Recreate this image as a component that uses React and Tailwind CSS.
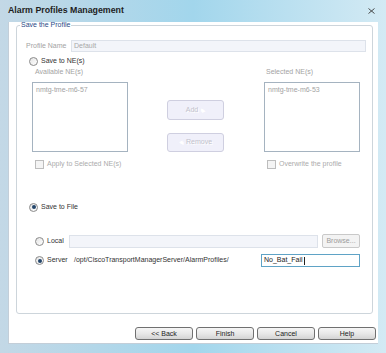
function Radio({ checked }) {
  return (
    <span className="w-[9px] h-[9px] shrink-0 rounded-full border border-[#8a8a8a] bg-linear-to-br from-[#e4e4e4] to-white flex items-center justify-center">
      {checked && <span className="w-[4px] h-[4px] rounded-full bg-[#23456b]" />}
    </span>
  );
}

function Check() {
  return <span className="w-[9px] h-[9px] shrink-0 border border-[#bdbdbd] bg-[#f4f4f4]" />;
}

function DimButton({ children, className }) {
  return (
    <div
      className={`w-[57px] h-[20px] rounded-[3px] border border-[#cfcfe0] bg-[#f0f0fa] flex items-center justify-center gap-[3px] text-[#c2c2cc] [text-shadow:1px_1px_0_#ffffff] ${className}`}
    >
      {children}
    </div>
  );
}

function WinButton({ children }) {
  return (
    <button className="w-[58px] h-[13px] rounded-[3px] border border-[#707070] bg-linear-to-b from-[#f6f6f6] via-[#e8e8e8] to-[#d4d4d4] text-[#222] leading-none flex items-center justify-center">
      {children}
    </button>
  );
}

export default function App() {
  return (
    <div className="w-[386px] h-[353px] overflow-hidden flex flex-col bg-linear-to-r from-[#c3d8e6] via-[#a2d6ec] to-[#d3eaf4] font-['Liberation_Sans',Arial,sans-serif] text-[7px] text-[#333]">
      <div className="h-[22px] shrink-0 flex items-center justify-between pl-[8px] pr-[11px]">
        <span className="text-[8.8px] font-bold text-[#1e1e1e]">Alarm Profiles Management</span>
        <svg width="7" height="6" viewBox="0 0 7 6">
          <path d="M0.5 0.5 L6.5 5.5 M6.5 0.5 L0.5 5.5" stroke="#3a3a3a" strokeWidth="0.9" />
        </svg>
      </div>

      <div className="h-[322px] shrink-0 ml-[8px] w-[370px] bg-white border-l border-b border-[#c3ced8] flex flex-col">
        <fieldset className="ml-[7px] w-[357px] h-[292px] border border-[#cdd5db] rounded-[3px]">
          <legend className="ml-[3px] px-[1px] leading-[6px] text-[#2a4a86]">Save the Profile</legend>

          <div className="mt-[12px] h-[12px] flex items-center">
            <span className="ml-[9px] w-[45px] text-[#a3a3a3]">Profile Name</span>
            <div className="w-[295px] h-[12px] border border-[#dde2ea] bg-[#f3f5fa] pl-[2px] flex items-center text-[#a8a8a8]">
              Default
            </div>
          </div>

          <div className="mt-[4px] h-[10px] flex items-center ml-[12px] gap-[3px]">
            <Radio />
            <span>Save to NE(s)</span>
          </div>

          <div className="mt-[2px] h-[8px] flex items-center text-[#a3a3a3]">
            <span className="ml-[18px] w-[231px]">Available NE(s)</span>
            <span>Selected NE(s)</span>
          </div>

          <div className="mt-[6px] h-[70px] flex">
            <div className="ml-[15px] w-[96px] h-[70px] border border-[#a5b3c0] px-[3px] pt-[2px] text-[#a3a3a3]">
              nmtg-tme-m6-57
            </div>
            <div className="ml-[39px] w-[57px] flex flex-col">
              <DimButton className="mt-[18px]">
                <span>Add</span>
                <span className="text-white">▸</span>
              </DimButton>
              <DimButton className="mt-[13px]">
                <span className="text-white">◂</span>
                <span>Remove</span>
              </DimButton>
            </div>
            <div className="ml-[40px] w-[96px] h-[70px] border border-[#a5b3c0] px-[3px] pt-[2px] text-[#a3a3a3]">
              nmtg-tme-m6-53
            </div>
          </div>

          <div className="mt-[8px] h-[9px] flex items-center text-[#ababab]">
            <div className="ml-[18px] w-[232px] flex items-center gap-[3px]">
              <Check />
              <span>Apply to Selected NE(s)</span>
            </div>
            <div className="flex items-center gap-[3px]">
              <Check />
              <span>Overwrite the profile</span>
            </div>
          </div>

          <div className="mt-[33px] h-[10px] flex items-center ml-[12px] gap-[3px]">
            <Radio checked />
            <span>Save to File</span>
          </div>

          <div className="mt-[22px] h-[14px] flex items-center">
            <div className="ml-[18px] w-[34px] flex items-center gap-[3px]">
              <Radio />
              <span>Local</span>
            </div>
            <div className="w-[249px] h-[13px] border border-[#dde2ea] bg-[#f3f5fa]" />
            <div className="ml-[4px] w-[38px] h-[14px] rounded-[2px] border border-[#c9c9c9] bg-[#f3f3f3] flex items-center justify-center text-[#9c9c9c]">
              Browse...
            </div>
          </div>

          <div className="mt-[6px] h-[13px] flex items-center">
            <div className="ml-[18px] w-[39px] flex items-center gap-[3px]">
              <Radio checked />
              <span>Server</span>
            </div>
            <span className="w-[187px]">/opt/CiscoTransportManagerServer/AlarmProfiles/</span>
            <div className="w-[99px] h-[13px] border border-[#5fa3c6] bg-white pl-[2px] flex items-center text-[#222]">
              No_Bat_Fail
              <span className="w-px h-[8px] bg-[#222] ml-px" />
            </div>
          </div>
        </fieldset>

        <div className="mt-[13px] flex justify-end gap-[3px] pr-[2px]">
          <WinButton>&lt;&lt; Back</WinButton>
          <WinButton>Finish</WinButton>
          <WinButton>Cancel</WinButton>
          <WinButton>Help</WinButton>
        </div>
      </div>
      <div className="flex-1" />
    </div>
  );
}
